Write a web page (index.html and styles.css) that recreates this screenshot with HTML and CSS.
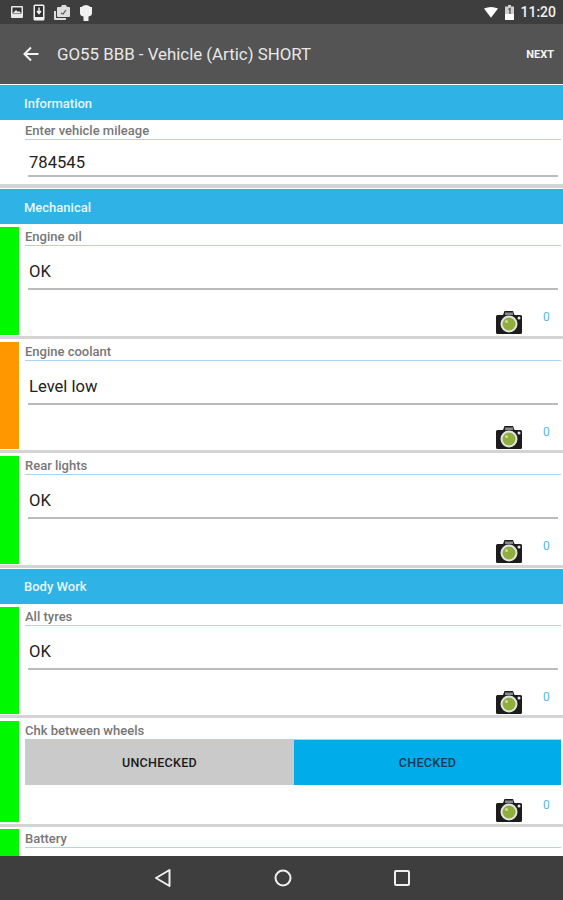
FILE: index.html
```html
<!DOCTYPE html>
<html lang="en">
<head>
    <meta charset="UTF-8">
    <meta name="viewport" content="width=device-width, initial-scale=1.0">
    <title>Vehicle check</title>
    <link rel="stylesheet" href="styles.css">
</head>
<body>
    <svg class="defs" width="0" height="0">
        <symbol id="camera" viewBox="0 0 28 24">
            <path d="M1 6.500Q1 5 2.500 5H8L9.500 1H18L19.500 5H25.500Q27 5 27 6.500V22.500Q27 24 25.500 24H2.500Q1 24 1 22.500Z" fill="#1c1c1c"/>
            <rect x="10" y="2.500" width="8" height="2.500" fill="#8a8a8a"/>
            <circle cx="14" cy="14" r="8.500" fill="#e4e4e4"/>
            <circle cx="14" cy="14" r="6.500" fill="#8fae3c"/>
            <circle cx="11.500" cy="11.500" r="1.500" fill="#cfdc9c"/>
            <circle cx="24" cy="8" r="1.500" fill="#e8e8e8"/>
        </symbol>
    </svg>

    <div class="status-bar">
        <div class="status-icons">
            <svg width="14" height="14" viewBox="0 0 14 14"><rect x="1" y="1" width="12" height="12" rx="1" fill="#e8e8e8"/><rect x="2.500" y="2.500" width="9" height="6" fill="#333"/><path d="M3 8l3-3 2 2 1-1 2 2z" fill="#e8e8e8"/></svg>
            <svg width="12" height="17" viewBox="0 0 12 17"><rect x="0.500" y="0.500" width="11" height="16" rx="1.500" fill="#f2f2f2"/><rect x="2" y="2" width="8" height="11" fill="#333"/><path d="M6 3.500v5M4 7l2 2.500L8 7" stroke="#f2f2f2" stroke-width="1.500" fill="none"/></svg>
            <svg width="16" height="15" viewBox="0 0 16 15"><path d="M0 6h2v7h10v2H1Q0 15 0 14z" fill="#ddd"/><rect x="3" y="2" width="13" height="10" rx="1" fill="#ddd"/><path d="M7 2l1-2h4l1 2z" fill="#ddd"/><path d="M7 8l2 1 3-4" stroke="#555" stroke-width="1.200" fill="none"/></svg>
            <svg width="14" height="17" viewBox="0 0 14 17"><path d="M3 2.500Q7-0.500 11 2.500V3H13V9Q13 12 9.500 12.500V17H4.500V12.500Q1 12 1 9V3H3Z" fill="#f2f2f2"/></svg>
        </div>
        <div class="status-right">
            <svg width="14" height="11" viewBox="0 0 16 12"><path d="M0 1.500Q8-2 16 1.500L8 12z" fill="#fff"/></svg>
            <svg width="9" height="15" viewBox="0 0 9 15"><path d="M3 0H6V1.500H9V15H0V1.500H3Z" fill="#cfcfcf"/><rect x="0" y="9" width="9" height="6" fill="#fff"/><path d="M3.500 4.500L5 3.500V9" stroke="#444" stroke-width="1.200" fill="none"/></svg>
            <span class="clock">11:20</span>
        </div>
    </div>

    <header class="toolbar">
        <svg class="back" width="16" height="16" viewBox="0 0 16 16"><path d="M15.500 8H2M8 1.500L1.500 8 8 14.500" stroke="#f4f4f4" stroke-width="2" fill="none"/></svg>
        <h1>GO55 BBB - Vehicle (Artic) SHORT</h1>
        <span class="next">NEXT</span>
    </header>

    <main class="content">
        <div class="section-head">Information</div>
        <div class="row row-plain">
            <div class="row-body">
                <div class="label">Enter vehicle mileage</div>
                <div class="value">784545</div>
            </div>
        </div>

        <div class="section-head">Mechanical</div>
        <div class="row">
            <div class="flag green"></div>
            <div class="row-body">
                <div class="label">Engine oil</div>
                <div class="value">OK</div>
                <div class="photo"><svg class="cam"><use href="#camera"/></svg><span class="count">0</span></div>
            </div>
        </div>
        <div class="row">
            <div class="flag orange"></div>
            <div class="row-body">
                <div class="label">Engine coolant</div>
                <div class="value">Level low</div>
                <div class="photo"><svg class="cam"><use href="#camera"/></svg><span class="count">0</span></div>
            </div>
        </div>
        <div class="row">
            <div class="flag green"></div>
            <div class="row-body">
                <div class="label">Rear lights</div>
                <div class="value">OK</div>
                <div class="photo"><svg class="cam"><use href="#camera"/></svg><span class="count">0</span></div>
            </div>
        </div>

        <div class="section-head">Body Work</div>
        <div class="row">
            <div class="flag green"></div>
            <div class="row-body">
                <div class="label">All tyres</div>
                <div class="value">OK</div>
                <div class="photo"><svg class="cam"><use href="#camera"/></svg><span class="count">0</span></div>
            </div>
        </div>
        <div class="row row-toggle">
            <div class="flag green"></div>
            <div class="row-body">
                <div class="label">Chk between wheels</div>
                <div class="toggle">
                    <div class="toggle-off">UNCHECKED</div>
                    <div class="toggle-on">CHECKED</div>
                </div>
                <div class="photo"><svg class="cam"><use href="#camera"/></svg><span class="count">0</span></div>
            </div>
        </div>
        <div class="row row-cut">
            <div class="flag green"></div>
            <div class="row-body">
                <div class="label">Battery</div>
            </div>
        </div>
    </main>

    <nav class="nav-bar">
        <svg width="18" height="20" viewBox="0 0 18 20"><path d="M15.500 2L2 10l13.500 8z" stroke="#efefef" stroke-width="2" fill="none" stroke-linejoin="round"/></svg>
        <svg width="18" height="18" viewBox="0 0 18 18"><circle cx="9" cy="9" r="7.500" stroke="#efefef" stroke-width="2" fill="none"/></svg>
        <svg width="16" height="16" viewBox="0 0 16 16"><rect x="1" y="1" width="14" height="14" rx="1" stroke="#efefef" stroke-width="2" fill="none"/></svg>
    </nav>
</body>
</html>
```

FILE: styles.css
```css
html, body {
    height: 100%;
}
body {
    margin: 0;
    height: 900px;
    overflow: hidden;
    display: flex;
    flex-direction: column;
    font-family: Roboto, "Liberation Sans", sans-serif;
    background-color: white;
    color: black;
}
.defs {
    position: absolute;
}
.status-bar {
    height: 24px;
    flex: none;
    display: flex;
    justify-content: space-between;
    align-items: center;
    padding: 0 7px 0 10px;
    background-color: #3e3e3e;
}
.status-icons {
    display: flex;
    align-items: center;
    gap: 9px;
}
.status-right {
    display: flex;
    align-items: center;
    gap: 7px;
}
.clock {
    margin-left: -1px;
    color: #f0f0f0;
    font-size: 14px;
    font-weight: 500;
}
.toolbar {
    height: 60px;
    flex: none;
    display: flex;
    align-items: center;
    padding: 0 9px 0 23px;
    background-color: #545454;
}
.toolbar h1 {
    flex: 1;
    margin: 0 0 0 18px;
    color: #e8e8e8;
    font-size: 16.85px;
    font-weight: 400;
}
.next {
    color: #f4f4f4;
    font-size: 11px;
    font-weight: 700;
}
.content {
    flex: 1;
    min-height: 0;
    overflow: hidden;
}
.section-head {
    height: 35px;
    margin-top: 1px;
    box-sizing: border-box;
    padding: 10.5px 0 0 24px;
    background-color: #2fb2e6;
    color: #e6f6fc;
    font-size: 13px;
    font-weight: 500;
    line-height: 15px;
}
.row {
    height: 107.5px;
    margin-top: 3px;
    padding-bottom: 1px;
    display: flex;
    border-bottom: 3px solid #d4d4d4;
}
.row-plain {
    height: 64px;
    margin-top: 0;
    padding-bottom: 0;
    border-bottom-width: 4px;
}
.row-toggle {
    height: 101px;
    margin-top: 3px;
    padding-bottom: 2px;
}
.row-cut {
    height: 27px;
    margin-top: 2px;
    padding-bottom: 0;
    border-bottom: none;
}
.flag {
    width: 19px;
    flex: none;
}
.green {
    background-color: #00f900;
}
.orange {
    background-color: #ff9800;
}
.row-body {
    flex: 1;
    min-width: 0;
    padding: 0 2px 0 6px;
}
.row-plain .row-body {
    padding-left: 25px;
}
.label {
    height: 19px;
    box-sizing: border-box;
    border-bottom: 1px solid #a9d4ef;
    padding-top: 1px;
    color: #777;
    font-size: 13px;
    font-weight: 500;
    line-height: 18px;
    white-space: nowrap;
}
.row-plain .label {
    height: 20px;
    padding-top: 2px;
}
.value {
    height: 44px;
    box-sizing: border-box;
    margin: 0 3px 0 3px;
    padding: 16px 0 0 1px;
    border-bottom: 2px solid #bbb;
    color: #222;
    font-size: 16.6px;
    line-height: 20px;
}
.row-plain .value {
    height: 37px;
    padding-top: 13px;
}
.photo {
    display: flex;
    justify-content: flex-end;
    align-items: flex-start;
    padding: 20px 8px 0 0;
}
.cam {
    width: 28px;
    height: 24px;
}
.count {
    width: 10px;
    margin-left: 20px;
    margin-top: 0;
    color: #52b8e8;
    font-size: 12px;
    line-height: 14px;
}
.toggle {
    height: 45px;
    display: flex;
    font-size: 12.500px;
    font-weight: 500;
    letter-spacing: 0.3px;
}
.toggle div {
    display: flex;
    justify-content: center;
    align-items: center;
}
.toggle-off {
    width: 269px;
    background-color: #cacaca;
    color: #1a1a1a;
}
.toggle-on {
    flex: 1;
    background-color: #00adea;
    color: #0c3a50;
}
.row-toggle .photo {
    padding-top: 13px;
}
.nav-bar {
    height: 44px;
    flex: none;
    display: flex;
    justify-content: center;
    align-items: center;
    gap: 102px;
    background-color: #3e3e3e;
}
```
